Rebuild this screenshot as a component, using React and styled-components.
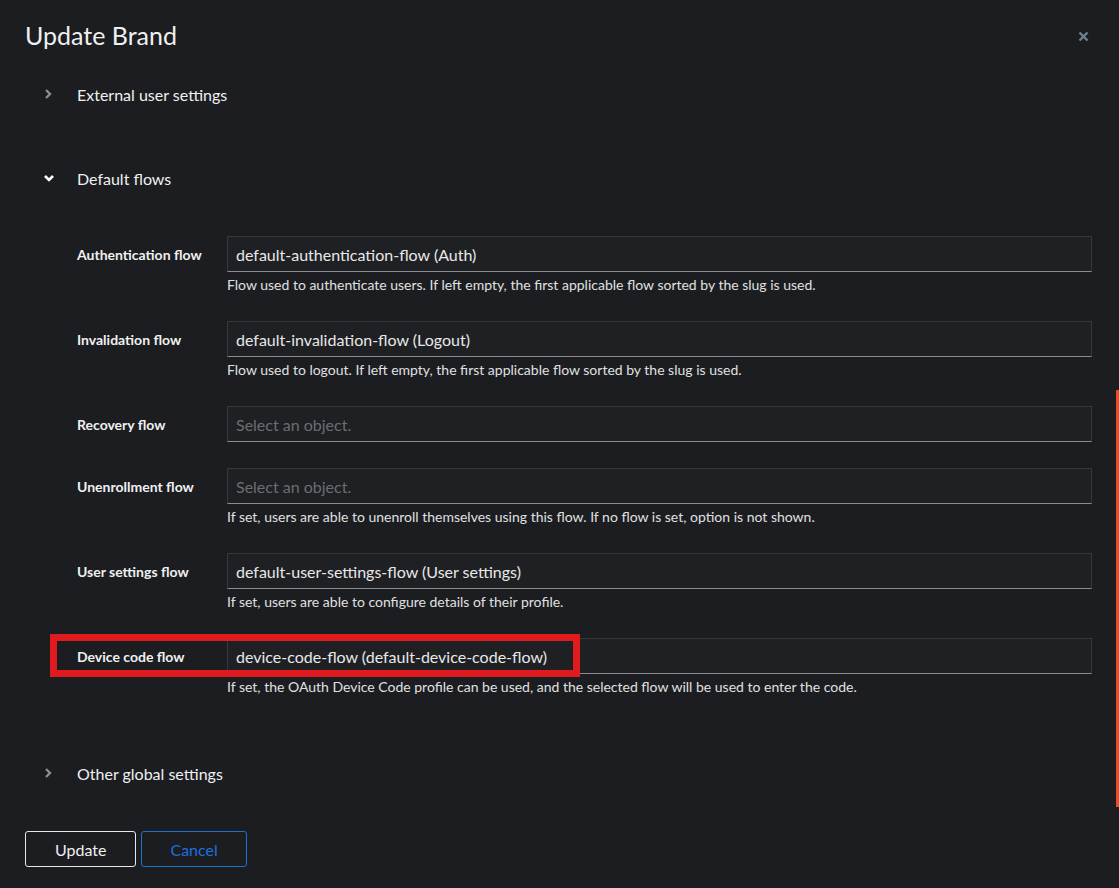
import React from "react";
import styled, { createGlobalStyle } from "styled-components";

const GlobalStyle = createGlobalStyle`
  html, body {
    margin: 0;
    padding: 0;
    background: #1b1d21;
  }
  body {
    font-family: Lato, "Liberation Sans", sans-serif;
    color: #e0e0e0;
  }
`;

const flows = [
  {
    label: "Authentication flow",
    value: "default-authentication-flow (Auth)",
    help: "Flow used to authenticate users. If left empty, the first applicable flow sorted by the slug is used.",
  },
  {
    label: "Invalidation flow",
    value: "default-invalidation-flow (Logout)",
    help: "Flow used to logout. If left empty, the first applicable flow sorted by the slug is used.",
  },
  { label: "Recovery flow", placeholder: "Select an object." },
  {
    label: "Unenrollment flow",
    placeholder: "Select an object.",
    help: "If set, users are able to unenroll themselves using this flow. If no flow is set, option is not shown.",
  },
  {
    label: "User settings flow",
    value: "default-user-settings-flow (User settings)",
    help: "If set, users are able to configure details of their profile.",
  },
  {
    label: "Device code flow",
    value: "device-code-flow (default-device-code-flow)",
    help: "If set, the OAuth Device Code profile can be used, and the selected flow will be used to enter the code.",
    highlight: true,
  },
];

function Chevron({ open }) {
  return (
    <ChevronBox $open={open}>
      <svg width="12" height="12" viewBox="0 0 12 12">
        {open ? (
          <path d="M2 4 L6 8 L10 4" fill="none" stroke="currentColor" strokeWidth="2.6" />
        ) : (
          <path d="M4 2 L8 6 L4 10" fill="none" stroke="currentColor" strokeWidth="2.4" />
        )}
      </svg>
    </ChevronBox>
  );
}

export default function App() {
  return (
    <>
      <GlobalStyle />
      <Modal>
        <Header>
          <Title>Update Brand</Title>
          <Close aria-label="close">
            <svg width="11" height="11" viewBox="0 0 11 11">
              <path d="M1.5 1.5 L9.5 9.5 M9.5 1.5 L1.5 9.5" stroke="currentColor" strokeWidth="2.4" />
            </svg>
          </Close>
        </Header>

        <Toggle $top={24}>
          <Chevron />
          <ToggleText>External user settings</ToggleText>
        </Toggle>

        <Toggle $top={48}>
          <Chevron open />
          <ToggleText>Default flows</ToggleText>
        </Toggle>

        <Body>
          {flows.map((f) => (
            <Group key={f.label}>
              <Row>
                <Label>{f.label}</Label>
                <Field $empty={!f.value}>{f.value || f.placeholder}</Field>
                {f.highlight && <Highlight />}
              </Row>
              {f.help && <Help>{f.help}</Help>}
            </Group>
          ))}
        </Body>

        <Toggle $top={58}>
          <Chevron />
          <ToggleText>Other global settings</ToggleText>
        </Toggle>

        <Footer>
          <Button>Update</Button>
          <Button $link>Cancel</Button>
        </Footer>
      </Modal>
      <ScrollMark />
    </>
  );
}

const Modal = styled.div`
  display: flex;
  flex-direction: column;
  padding: 18px 0 20px 25px;
  min-height: 848px;
  box-sizing: border-box;
`;

const Header = styled.div`
  display: flex;
  align-items: center;
  justify-content: space-between;
  padding-right: 30px;
  height: 34px;
`;

const Title = styled.h1`
  margin: 0;
  font-size: 25px;
  font-weight: 400;
  color: #f0f0f0;
  line-height: 34px;
`;

const Close = styled.button`
  background: none;
  border: none;
  padding: 0;
  color: #72808e;
  display: flex;
  margin-top: 3px;
`;

const Toggle = styled.div`
  display: flex;
  align-items: center;
  height: 36px;
  margin-top: ${(p) => p.$top}px;
`;

const ChevronBox = styled.span`
  width: 52px;
  display: flex;
  justify-content: flex-start;
  padding-left: ${(p) => (p.$open ? 18 : 17)}px;
  box-sizing: border-box;
  color: ${(p) => (p.$open ? "#ffffff" : "#8a8d90")};
`;

const ToggleText = styled.span`
  font-size: 16px;
  color: #f0f0f0;
`;

const Body = styled.div`
  display: flex;
  flex-direction: column;
  gap: 26px;
  margin-top: 40px;
  padding-left: 52px;
  padding-right: 27px;
`;

const Group = styled.div`
  display: flex;
  flex-direction: column;
`;

const Row = styled.div`
  position: relative;
  display: grid;
  grid-template-columns: 150px 1fr;
  align-items: center;
`;

const Label = styled.div`
  font-size: 14px;
  font-weight: 700;
  color: #f0f0f0;
`;

const Field = styled.div`
  height: 36px;
  box-sizing: border-box;
  display: flex;
  align-items: center;
  padding: 0 8px;
  background: #1f2024;
  border: 1px solid #36383c;
  border-bottom-color: #8a8d90;
  font-size: 16px;
  color: ${(p) => (p.$empty ? "#6a6e73" : "#e8e8e8")};
`;

const Highlight = styled.div`
  position: absolute;
  left: -27px;
  top: -4px;
  width: 530px;
  height: 43px;
  border: 7px solid #e01b1f;
  box-sizing: border-box;
  pointer-events: none;
`;

const Help = styled.div`
  margin-left: 150px;
  margin-top: 3px;
  font-size: 14px;
  line-height: 20px;
  color: #e0e0e0;
`;

const Footer = styled.div`
  display: flex;
  gap: 5px;
  margin-top: 40px;
`;

const Button = styled.button`
  height: 36px;
  padding: 0 ${(p) => (p.$link ? 28 : 29)}px;
  background: transparent;
  border: 1px solid ${(p) => (p.$link ? "#1f6fcf" : "#e8e8e8")};
  border-radius: 3px;
  font-family: inherit;
  font-size: 16px;
  color: ${(p) => (p.$link ? "#1f6fdf" : "#f0f0f0")};
`;

const ScrollMark = styled.div`
  position: fixed;
  right: 0;
  top: 390px;
  width: 3px;
  height: 417px;
  background: #f04a25;
`;
